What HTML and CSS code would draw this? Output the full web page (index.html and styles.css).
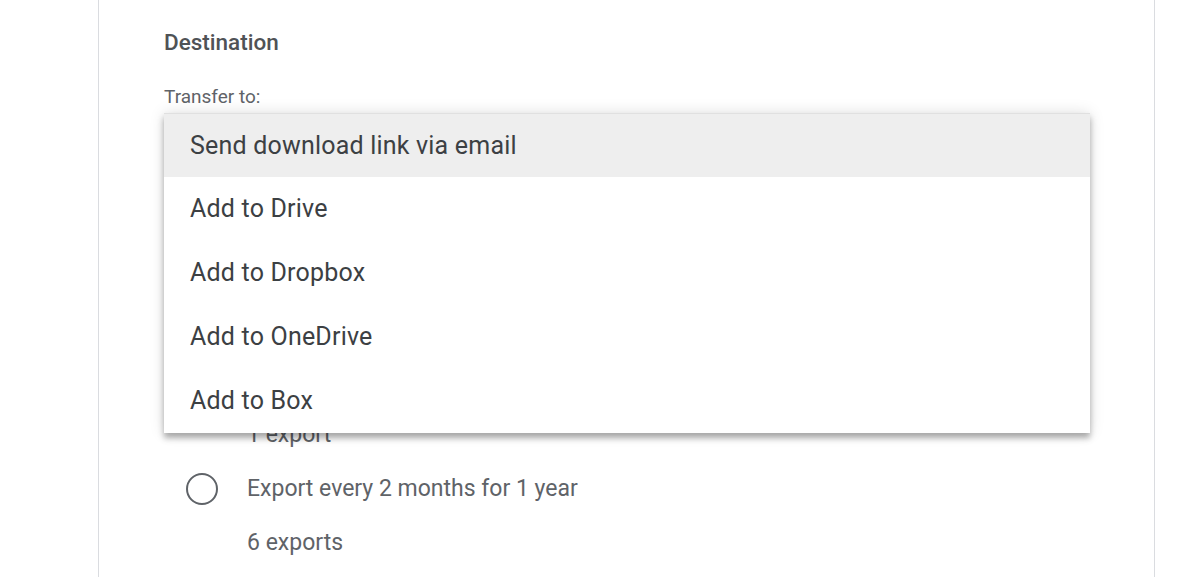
FILE: index.html
```html
<!DOCTYPE html>
<html lang="en">
<head>
    <meta charset="UTF-8">
    <meta name="viewport" content="width=device-width, initial-scale=1.0">
    <title>Destination</title>
    <link rel="stylesheet" href="styles.css">
</head>
<body>
    <div class="card">
        <h2 class="section-title">Destination</h2>
        <div class="field">
            <label class="field-label">Transfer to:</label>
            <div class="select"></div>
            <ul class="menu">
                <li class="menu-item selected">Send download link via email</li>
                <li class="menu-item">Add to Drive</li>
                <li class="menu-item">Add to Dropbox</li>
                <li class="menu-item">Add to OneDrive</li>
                <li class="menu-item">Add to Box</li>
            </ul>
        </div>
        <div class="section">
            <h3 class="sub-title">Frequency</h3>
            <div class="option">
                <span class="radio checked"></span>
                <div class="option-text">
                    <div class="option-label">Export once</div>
                    <div class="option-hint">1 export</div>
                </div>
            </div>
            <div class="option">
                <span class="radio"></span>
                <div class="option-text">
                    <div class="option-label">Export every 2 months for 1 year</div>
                    <div class="option-hint">6 exports</div>
                </div>
            </div>
        </div>
    </div>
</body>
</html>
```

FILE: styles.css
```css
body {
    margin: 0;
    background: #fff;
    font-family: Roboto, "Liberation Sans", Arial, sans-serif;
    color: #3c4043;
    overflow: hidden;
}
.card {
    margin-left: 98px;
    width: 1057px;
    height: 577px;
    border-left: 1px solid #dadce0;
    border-right: 1px solid #dadce0;
    padding: 28px 65px 0;
    box-sizing: border-box;
}
.section-title {
    margin: 0;
    font-size: 22.5px;
    font-weight: 500;
    line-height: 28px;
    color: #4f5256;
}
.field {
    position: relative;
    margin-top: 29px;
}
.field-label {
    display: block;
    font-size: 19px;
    line-height: 24px;
    color: #5f6368;
}
.select {
    height: 60px;
    margin-top: 8px;
    border-bottom: 1px solid #80868b;
}
.menu {
    position: absolute;
    top: 28px;
    left: 0;
    width: 926px;
    margin: 0;
    padding: 0;
    list-style: none;
    background: #fff;
    border-top: 1px solid #e0e0e0;
    box-shadow: 0 5px 6px rgba(0, 0, 0, 0.3), 0 0 14px rgba(0, 0, 0, 0.13);
    z-index: 2;
}
.menu-item {
    height: 64px;
    line-height: 63px;
    padding-left: 26px;
    font-size: 25px;
    letter-spacing: 0.2px;
    color: #3c4043;
}
.menu-item.selected {
    height: 63px;
    background: #eeeeee;
}
.section {
    margin-top: 54px;
}
.sub-title {
    margin: 0 0 94px;
    font-size: 22px;
    font-weight: 500;
    line-height: 28px;
}
.option {
    display: flex;
    align-items: flex-start;
    gap: 29px;
    padding-left: 22px;
}
.radio {
    width: 28px;
    height: 28px;
    border: 2px solid #5f6368;
    border-radius: 50%;
    flex-shrink: 0;
    margin-top: 11px;
}
.option-label,
.option-hint {
    font-size: 23px;
    line-height: 54px;
    color: #5f6368;
}
```
